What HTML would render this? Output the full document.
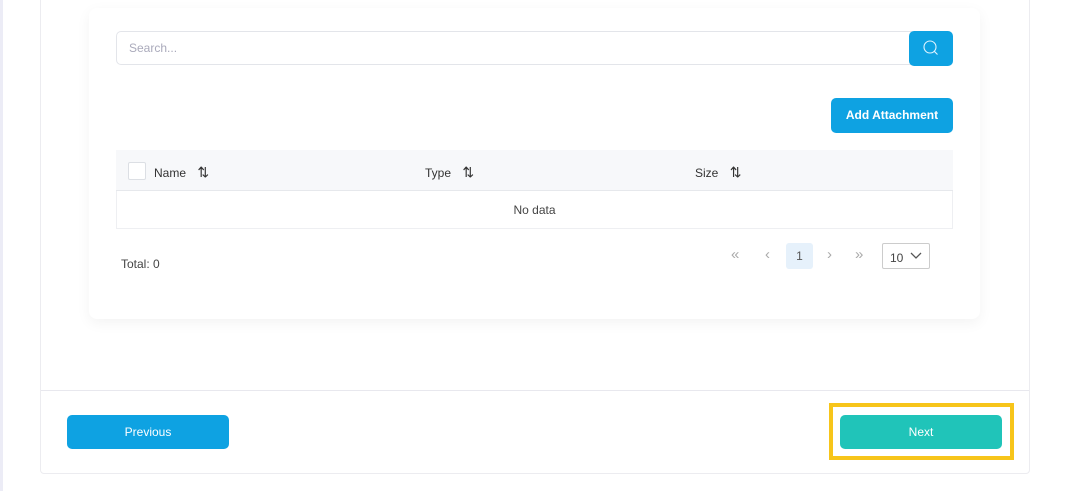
<!DOCTYPE html>
<html><head><style>
*{box-sizing:border-box;margin:0;padding:0}
body{width:1067px;height:491px;background:#fff;font-family:"Liberation Sans",sans-serif;position:relative;overflow:hidden}
.abs{position:absolute}
</style></head><body>
<div class="abs" style="left:0;top:0;width:3px;height:491px;background:#ececf6"></div>
<div class="abs" style="left:40px;top:-5px;width:990px;height:479px;border:1px solid #ececf0;border-radius:4px"></div>
<div class="abs" style="left:41px;top:390px;width:988px;height:1px;background:#e8e8ee"></div>
<div class="abs" style="left:89px;top:8px;width:891px;height:311px;background:#fff;border-radius:8px;box-shadow:0 4px 14px rgba(0,0,0,0.05)"></div>
<div class="abs" style="left:116px;top:31px;width:796px;height:34px;border:1px solid #e3e5ea;border-radius:5px 0 0 5px;font-size:12px;color:#aab;padding:9px 12px">Search...</div>
<div class="abs" style="left:909px;top:31px;width:44px;height:35px;background:#0ea2e2;border-radius:5px">
<svg width="44" height="35" viewBox="0 0 44 35"><circle cx="21" cy="16" r="6" fill="none" stroke="#dff3ff" stroke-width="1.1"/><line x1="25.3" y1="20.3" x2="28.5" y2="23.5" stroke="#dff3ff" stroke-width="1.1"/></svg></div>
<div class="abs" style="left:831px;top:98px;width:122px;height:35px;background:#0ea2e2;border-radius:5px;color:#fff;font-size:12px;font-weight:bold;text-align:center;line-height:35px">Add Attachment</div>
<div class="abs" style="left:116px;top:150px;width:837px;height:79px;border:1px solid #eeeff2"></div>
<div class="abs" style="left:116px;top:150px;width:837px;height:41px;background:#f7f8fa;border-bottom:1px solid #e6e8ec"></div>
<div class="abs" style="left:128px;top:162px;width:18px;height:18px;border:1px solid #dcdfe4;background:#fff;border-radius:2px"></div>
<div class="abs" style="left:154px;top:164px;font-size:12px;color:#333">Name <span style="margin-left:8px;font-size:14px">⇅</span></div>
<div class="abs" style="left:425px;top:164px;font-size:12px;color:#333">Type <span style="margin-left:8px;font-size:14px">⇅</span></div>
<div class="abs" style="left:695px;top:164px;font-size:12px;color:#333">Size <span style="margin-left:8px;font-size:14px">⇅</span></div>
<div class="abs" style="left:116px;top:203px;width:837px;text-align:center;font-size:12px;color:#444">No data</div>
<div class="abs" style="left:121px;top:257px;font-size:12px;color:#444">Total: 0</div>
<div class="abs" style="left:731px;top:246px;font-size:15px;color:#aaa">«</div>
<div class="abs" style="left:765px;top:246px;font-size:15px;color:#aaa">‹</div>
<div class="abs" style="left:786px;top:243px;width:27px;height:26px;background:#e6f1fb;border-radius:3px;font-size:12px;color:#555;text-align:center;line-height:26px">1</div>
<div class="abs" style="left:827px;top:246px;font-size:15px;color:#aaa">›</div>
<div class="abs" style="left:855px;top:246px;font-size:15px;color:#aaa">»</div>
<div class="abs" style="left:882px;top:243px;width:48px;height:26px;border:1px solid #ccc;border-radius:2px;font-size:12px;color:#444;padding:7px 7px 5px">10
<svg class="abs" style="left:27px;top:8px" width="12" height="8"><path d="M1 1l5 5 5-5" fill="none" stroke="#555" stroke-width="1.3"/></svg></div>
<div class="abs" style="left:67px;top:415px;width:162px;height:34px;background:#0ea2e2;border-radius:5px;color:#fff;font-size:12px;text-align:center;line-height:34px">Previous</div>
<div class="abs" style="left:829px;top:403px;width:185px;height:57px;border:4px solid #f7c51a"></div>
<div class="abs" style="left:840px;top:415px;width:162px;height:34px;background:#20c4b9;border-radius:5px;color:#fff;font-size:12px;text-align:center;line-height:34px">Next</div>
</body></html>
